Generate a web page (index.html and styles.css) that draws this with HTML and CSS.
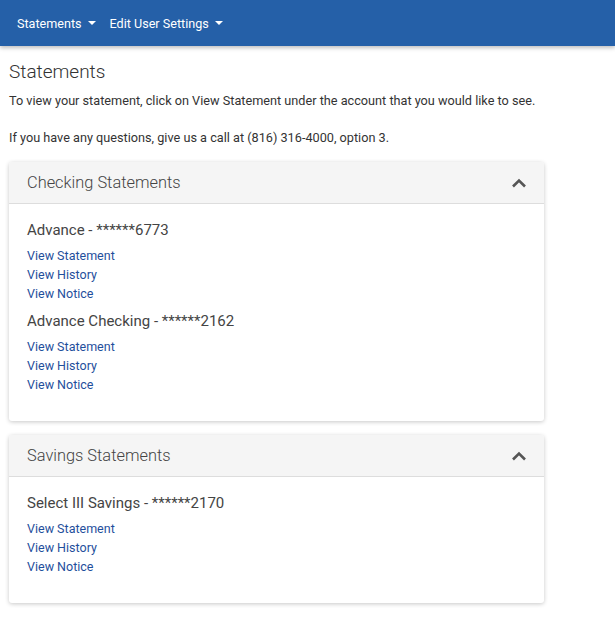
FILE: index.html
```html
<!DOCTYPE html>
<html lang="en">
<head>
<meta charset="utf-8">
<title>Statements</title>
<link rel="stylesheet" href="styles.css">
</head>
<body>
<nav class="navbar">
  <a class="nav-item">Statements <span class="caret"></span></a>
  <a class="nav-item">Edit User Settings <span class="caret"></span></a>
</nav>
<main class="content">
  <h1 class="page-title">Statements</h1>
  <p class="intro">To view your statement, click on View Statement under the account that you would like to see.</p>
  <p class="intro">If you have any questions, give us a call at (816) 316-4000, option 3.</p>

  <section class="card">
    <header class="card-header">
      <h2 class="card-title">Checking Statements</h2>
      <svg class="chevron" width="16" height="10" viewBox="0 0 16 10"><path d="M2 8.5 L8 2.5 L14 8.5" fill="none" stroke="#555" stroke-width="2.6"/></svg>
    </header>
    <div class="card-body">
      <div class="account">
        <h3 class="account-name">Advance - ******6773</h3>
        <a class="link">View Statement</a>
        <a class="link">View History</a>
        <a class="link">View Notice</a>
      </div>
      <div class="account">
        <h3 class="account-name">Advance Checking - ******2162</h3>
        <a class="link">View Statement</a>
        <a class="link">View History</a>
        <a class="link">View Notice</a>
      </div>
    </div>
  </section>

  <section class="card">
    <header class="card-header">
      <h2 class="card-title">Savings Statements</h2>
      <svg class="chevron" width="16" height="10" viewBox="0 0 16 10"><path d="M2 8.5 L8 2.5 L14 8.5" fill="none" stroke="#555" stroke-width="2.6"/></svg>
    </header>
    <div class="card-body">
      <div class="account">
        <h3 class="account-name">Select III Savings - ******2170</h3>
        <a class="link">View Statement</a>
        <a class="link">View History</a>
        <a class="link">View Notice</a>
      </div>
    </div>
  </section>
</main>
</body>
</html>
```
FILE: styles.css
```css
* { box-sizing: border-box; }
html, body { margin: 0; padding: 0; background: #fff; }
body {
  font-family: Roboto, "Liberation Sans", sans-serif;
  color: #333;
  font-size: 12.5px;
}
.navbar {
  height: 46px;
  background: #2560a8;
  display: flex;
  align-items: center;
  padding: 0 17px;
  gap: 14px;
  box-shadow: 0 2px 4px rgba(0,0,0,0.25);
}
.nav-item {
  color: #fff;
  font-size: 12.6px;
  display: flex;
  align-items: center;
  gap: 3px;
}
.caret {
  display: inline-block;
  width: 0; height: 0;
  border-left: 4px solid transparent;
  border-right: 4px solid transparent;
  border-top: 4px solid #fff;
  margin-left: 3px;
}
.content {
  padding: 0 9px;
}
.page-title {
  font-size: 19px;
  font-weight: 300;
  line-height: 22px;
  margin: 15px 0 8px;
  color: #333;
}
.intro {
  margin: 0 0 18px;
  line-height: 19px;
  font-size: 12.7px;
}
.intro:last-of-type { margin-bottom: 15px; }
.card {
  width: 535px;
  background: #fff;
  border-radius: 3px;
  box-shadow: 0 1px 4px rgba(0,0,0,0.22);
  margin-bottom: 14px;
  overflow: hidden;
}
.card-header {
  height: 42px;
  background: #f5f5f5;
  border-bottom: 1px solid #ddd;
  display: flex;
  align-items: center;
  justify-content: space-between;
  padding: 0 18px;
}
.card-title {
  margin: 0;
  font-size: 16.4px;
  font-weight: 300;
  color: #444;
}
.chevron { display: block; margin-right: -1px; }
.card-body {
  padding: 16px 18px 27px;
  display: flex;
  flex-direction: column;
  gap: 8px;
}
.account { display: flex; flex-direction: column; }
.account-name {
  margin: 0 0 6px;
  font-size: 15px;
  font-weight: 400;
  line-height: 20px;
  color: #444;
}
.link {
  color: #1f4f9c;
  line-height: 19px;
  font-size: 12.5px;
}
```
